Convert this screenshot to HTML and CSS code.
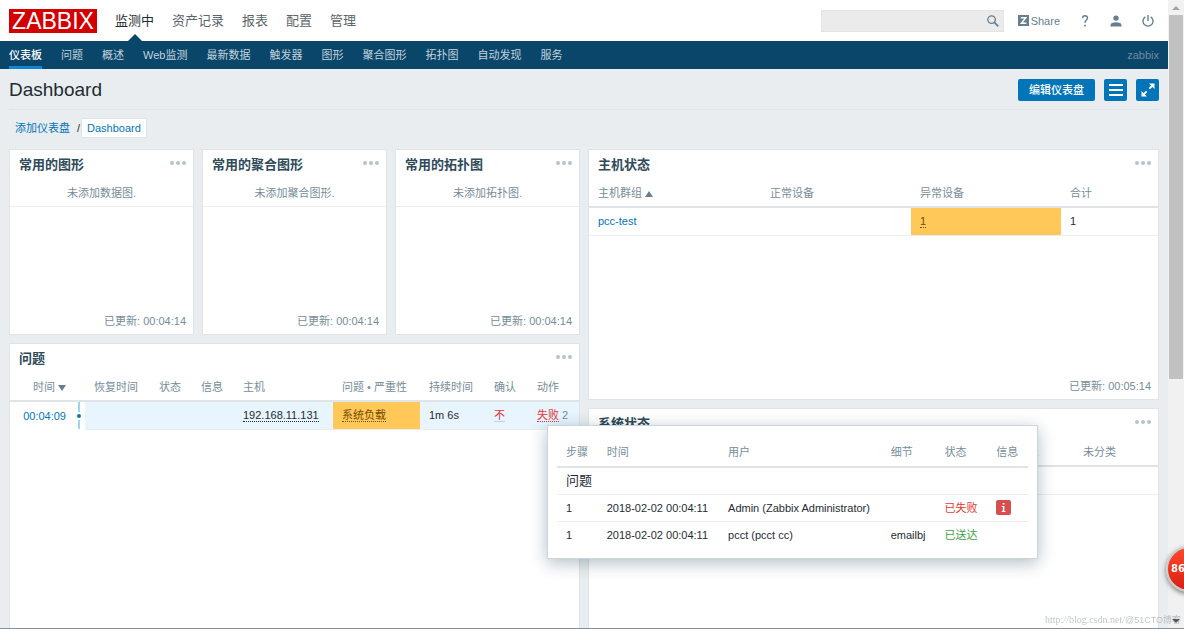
FILE: index.html
```html
<!DOCTYPE html>
<html lang="zh-CN">
<head>
<meta charset="utf-8">
<title>Dashboard</title>
<link rel="stylesheet" href="styles.css">
</head>
<body>
<div class="app">
  <div class="page">
    <header class="top">
      <a class="logo" href="#">ZABBIX</a>
      <nav class="main-nav">
        <a class="active" href="#">监测中</a><a href="#">资产记录</a><a href="#">报表</a><a href="#">配置</a><a href="#">管理</a>
      </nav>
      <form class="search">
        <input type="text" aria-label="搜索">
        <button type="button" aria-label="搜索"><svg viewBox="0 0 12 12" width="12" height="12"><circle cx="4.600" cy="4.600" r="3.800" fill="none" stroke="currentColor" stroke-width="1.300"/><path d="M7.300 7.300L11.300 11.300" stroke="currentColor" stroke-width="1.800"/></svg></button>
      </form>
      <div class="tools">
        <a class="share" href="#"><svg viewBox="0 0 11 11" width="11" height="11"><path d="M0 0h11v11H0z" fill="currentColor"/><path d="M2.800 2.800h5L3.400 8.200H8.400" fill="none" stroke="#fff" stroke-width="1.400"/></svg>Share</a>
        <a href="#" aria-label="帮助"><svg viewBox="1 0 10 12" width="10" height="12"><path d="M3.500 3.300C3.600 1.500 4.700.8 6 .8c1.500 0 2.500.9 2.500 2.300C8.500 5 6 5.200 6 7.800" fill="none" stroke="currentColor" stroke-width="1.400"/><path d="M5.200 9.800h1.600v1.600H5.200z" fill="currentColor"/></svg></a>
        <a href="#" aria-label="用户"><svg viewBox="0 0 12 12" width="12" height="12"><circle cx="6" cy="3.100" r="2.700" fill="currentColor"/><path d="M.5 11.500V10C.5 8.200 3 7.200 6 7.200s5.500 1 5.500 2.800v1.500z" fill="currentColor"/></svg></a>
        <a href="#" aria-label="退出"><svg viewBox="0 0 12 12" width="12" height="12"><path d="M3.300 1.900a5 5 0 1 0 5.400 0M6 0v6" fill="none" stroke="currentColor" stroke-width="1.400"/></svg></a>
      </div>
    </header>
    <nav class="sub-nav">
      <a class="active" href="#">仪表板</a><a href="#">问题</a><a href="#">概述</a><a href="#">Web监测</a><a href="#">最新数据</a><a href="#">触发器</a><a href="#">图形</a><a href="#">聚合图形</a><a href="#">拓扑图</a><a href="#">自动发现</a><a href="#">服务</a>
      <span class="server">zabbix</span>
    </nav>
    <main>
      <div class="title-row">
        <h1>Dashboard</h1>
        <button class="btn" type="button">编辑仪表盘</button>
        <button class="btn icon" type="button" aria-label="菜单"><svg viewBox="0 0 14 12" width="14" height="12"><path d="M0 1h14M0 6h14M0 11h14" stroke="#fff" stroke-width="2"/></svg></button>
        <button class="btn icon" type="button" aria-label="全屏"><svg viewBox="0 0 14 14" width="14" height="14"><path d="M8 .5h5.500V6zM.5 8v5.500H6z" fill="#fff"/><path d="M8.300 5.700l3.200-3.200M2.500 11.500l3.200-3.200" stroke="#fff" stroke-width="1.800"/></svg></button>
      </div>
      <div class="crumbs"><a href="#">添加仪表盘</a><span>/</span><a class="current" href="#">Dashboard</a></div>
      <div class="dashboard">
        <div class="column">
          <div class="trio">
            <section class="panel">
              <div class="panel-head"><h2>常用的图形</h2><button class="dots" type="button" aria-label="更多"><i></i><i></i><i></i></button></div>
              <p class="empty">未添加数据图.</p>
              <p class="updated">已更新: 00:04:14</p>
            </section>
            <section class="panel">
              <div class="panel-head"><h2>常用的聚合图形</h2><button class="dots" type="button" aria-label="更多"><i></i><i></i><i></i></button></div>
              <p class="empty">未添加聚合图形.</p>
              <p class="updated">已更新: 00:04:14</p>
            </section>
            <section class="panel">
              <div class="panel-head"><h2>常用的拓扑图</h2><button class="dots" type="button" aria-label="更多"><i></i><i></i><i></i></button></div>
              <p class="empty">未添加拓扑图.</p>
              <p class="updated">已更新: 00:04:14</p>
            </section>
          </div>
          <section class="panel fill">
            <div class="panel-head"><h2>问题</h2><button class="dots" type="button" aria-label="更多"><i></i><i></i><i></i></button></div>
            <table class="list problems">
              <thead><tr><th class="c-time">时间 <i class="sort down"></i></th><th class="c-line"></th><th class="c-recovery">恢复时间</th><th class="c-status">状态</th><th class="c-info">信息</th><th class="c-host">主机</th><th class="c-problem">问题 • 严重性</th><th class="c-duration">持续时间</th><th class="c-ack">确认</th><th class="c-action">动作</th></tr></thead>
              <tbody><tr>
                <td class="c-time"><a href="#">00:04:09</a></td><td class="c-line"><i class="dot"></i></td><td></td><td></td><td></td>
                <td><a class="dark" href="#">192.168.11.131</a></td>
                <td class="warn"><a class="brown" href="#">系统负载</a></td>
                <td>1m 6s</td>
                <td><a class="ack" href="#">不</a></td>
                <td class="action"><a class="fail" href="#">失败</a> <span class="count">2</span>
                  <div class="popup">
                    <table>
                      <thead><tr><th>步骤</th><th>时间</th><th>用户</th><th>细节</th><th>状态</th><th>信息</th></tr></thead>
                      <tbody>
                        <tr><td class="group" colspan="6">问题</td></tr>
                        <tr><td>1</td><td>2018-02-02 00:04:11</td><td>Admin (Zabbix Administrator)</td><td></td><td class="red">已失败</td><td><button class="info" type="button" aria-label="信息"><svg viewBox="0 0 15 15" width="15" height="15"><path d="M6.700 3h1.800v1.600H6.700zM5.700 6h2.700v5h1v1H5.700v-1h1.100V7H5.700z" fill="#fff"/></svg></button></td></tr>
                        <tr><td>1</td><td>2018-02-02 00:04:11</td><td>pcct (pcct cc)</td><td>emailbj</td><td class="green">已送达</td><td></td></tr>
                      </tbody>
                    </table>
                  </div>
                </td>
              </tr></tbody>
            </table>
          </section>
        </div>
        <div class="column">
          <section class="panel hosts-panel">
            <div class="panel-head"><h2>主机状态</h2><button class="dots" type="button" aria-label="更多"><i></i><i></i><i></i></button></div>
            <table class="list hosts">
              <thead><tr><th>主机群组 <i class="sort up"></i></th><th class="h-count">正常设备</th><th class="h-count">异常设备</th><th class="h-total">合计</th></tr></thead>
              <tbody><tr><td><a href="#">pcc-test</a></td><td></td><td class="warn"><a class="brown" href="#">1</a></td><td>1</td></tr></tbody>
            </table>
            <p class="updated">已更新: 00:05:14</p>
          </section>
          <section class="panel fill">
            <div class="panel-head"><h2>系统状态</h2><button class="dots" type="button" aria-label="更多"><i></i><i></i><i></i></button></div>
            <table class="list system">
              <thead><tr><th class="s-rest">.</th><th class="s-none">未分类</th></tr></thead>
              <tbody><tr><td></td><td></td></tr></tbody>
            </table>
          </section>
        </div>
      </div>
    </main>
  </div>
  <div class="scrollbar"><i class="arrow-up"></i><div class="thumb"></div><i class="arrow-down"></i></div>
</div>
<div class="badge">86</div>
<div class="mark"><span class="mark-url">http://blog.csdn.net/</span><span class="mark-site">@51CTO博客</span></div>
</body>
</html>
```

FILE: styles.css
```css
* { box-sizing: border-box; }
body {
  margin: 0;
  background: #e9edef;
  color: #1f2c33;
  font: 11px/16px "Liberation Sans", Arial, "Noto Sans CJK SC", sans-serif;
}
a { color: #0275b8; text-decoration: none; }
button { font: inherit; border: 0; padding: 0; cursor: pointer; }
h1, h2, p { margin: 0; }
svg { display: block; }
.app {
  display: grid;
  grid-template-columns: minmax(0, 1fr) 16px;
  height: 100vh;
  overflow: hidden;
  border-bottom: 1px solid #8b8f92;
}
.page { display: flex; flex-direction: column; min-height: 0; }

.top { display: flex; align-items: center; height: 41px; padding: 0 14px 0 9px; background: #fff; flex: none; }
.logo { width: 88px; height: 24px; background: #d40000; color: #fff; font-size: 23px; line-height: 24px; text-align: center; }
.main-nav { display: flex; gap: 18px; margin-left: 18px; align-self: stretch; }
.main-nav a { position: relative; font-size: 13px; line-height: 41px; color: #5a6469; }
.main-nav .active { color: #1f2c33; }
.main-nav .active::after {
  content: "";
  position: absolute;
  left: 50%;
  bottom: 0;
  margin-left: -7px;
  border: 7px solid transparent;
  border-top: 0;
  border-bottom-color: #0a466a;
}
.search { display: flex; margin-left: auto; width: 183px; height: 22px; background: #ebebeb; border: 1px solid #e2e4e5; }
.search input { flex: 1; min-width: 0; border: 0; background: none; outline: 0; }
.search button { width: 16px; background: none; color: #66808f; }
.tools { display: flex; align-items: center; gap: 20px; margin-left: 14px; }
.tools a { display: flex; align-items: center; gap: 2px; color: #66808f; }

.sub-nav { display: flex; gap: 19px; height: 28px; padding: 0 9px; background: #0a466a; flex: none; }
.sub-nav a { color: #c3d3dd; line-height: 28px; }
.sub-nav .active { color: #fff; font-weight: 500; border-bottom: 3px solid #0f86d4; }
.sub-nav .server { margin-left: auto; line-height: 28px; color: #6d8ca0; }

main { flex: 1; display: flex; flex-direction: column; min-height: 0; padding: 0 9px; }
.title-row { display: flex; align-items: center; gap: 9px; height: 41px; padding-top: 2px; border-bottom: 1px solid #dfe4e7; flex: none; }
h1 { flex: 1; font-size: 19px; line-height: 24px; font-weight: 400; }
.btn { display: flex; align-items: center; justify-content: center; height: 22px; padding: 0 11px; background: #0275b8; color: #fff; border-radius: 2px; font-weight: 500; }
.btn.icon { width: 23px; padding: 0; }
.crumbs { display: flex; align-items: center; height: 39px; padding: 0 6px 3px; flex: none; }
.crumbs span { margin-left: 7px; }
.crumbs .current { padding: 1px 5px; background: #fff; border: 1px solid #dfe4e7; margin-left: 1px; }

.dashboard { flex: 1; display: grid; grid-template-columns: minmax(0, 1fr) minmax(0, 1fr); gap: 8px; min-height: 0; }
.column { display: flex; flex-direction: column; gap: 8px; min-width: 0; }
.trio { display: grid; grid-template-columns: repeat(3, minmax(0, 1fr)); gap: 8px; }
.panel { display: flex; flex-direction: column; background: #fff; border: 1px solid #dfe4e7; min-height: 186px; }
.hosts-panel { min-height: 251px; }
.fill { flex: 1; border-bottom: 0; }
.panel-head { display: flex; justify-content: space-between; height: 30px; padding: 0 7px 0 9px; }
h2 { font-size: 13px; line-height: 30px; font-weight: 700; color: #2f4a59; }
.dots { display: flex; gap: 2px; align-items: center; height: 25px; background: none; }
.dots i { width: 4px; height: 4px; border-radius: 50%; background: #b4c3cc; }
.empty { padding: 5px 0; text-align: center; color: #768d99; border-bottom: 1px solid #ebeef0; }
.updated { margin-top: auto; padding: 0 7px 5px; text-align: right; color: #768d99; }

table { border-collapse: collapse; }
th, td { padding: 0 9px; text-align: left; white-space: nowrap; font-weight: 400; }
th { color: #768d99; }
.list { width: 100%; table-layout: fixed; }
.list > thead th { height: 27px; border-bottom: 2px solid #dfe4e7; }
.list > tbody > tr > td { height: 28px; border-bottom: 1px solid #ebeef0; }
.sort { display: inline-block; border: 4px solid transparent; }
.sort.up { border-top: 0; border-bottom: 6px solid #66808f; }
.sort.down { border-bottom: 0; border-top: 6px solid #66808f; }
.warn { background: #ffc859; }
.dark, .brown, .fail { border-bottom: 1px dotted; }
.dark { color: #1f2c33; }
.brown { color: #734d00; }
.fail, .ack { color: #e33734; }
.ack { border-bottom: 1px solid #c6cfd5; }
.count { color: #768d99; }
.h-count { width: 150px; }
.h-total { width: 97px; }

.problems > tbody > tr { background: #e8f5ff; }
.problems .c-time { width: 65px; text-align: right; background: #fff; }
.problems > tbody .c-time, .problems > tbody .c-line { border-bottom: 0; }
.problems .c-line { width: 10px; padding: 0; background: #fff; }
.problems td.c-line { background: linear-gradient(#9fd3f3, #9fd3f3) 3px 0 / 2px 100% no-repeat #fff; }
.dot { display: block; width: 8px; height: 8px; border: 2px solid #fff; border-radius: 50%; background: #0275b8; }
.c-recovery, .c-duration { width: 65px; }
.c-status, .c-info { width: 42px; }
.c-problem { width: 87px; }
.c-ack { width: 43px; }
.c-action { width: 51px; }
.action { position: relative; }

.popup {
  position: absolute;
  z-index: 2;
  left: 19px;
  top: 23px;
  width: 491px;
  padding: 10px 9px;
  background: #fff;
  border: 1px solid #ccd5d9;
  box-shadow: 0 4px 16px rgba(0, 40, 60, 0.3);
}
.popup table { width: 100%; }
.popup th { height: 31px; padding-top: 2px; border-bottom: 2px solid #dfe4e7; }
.popup td { height: 27px; border-bottom: 1px solid #ebeef0; }
.popup tr:last-child td { border-bottom: 0; }
.popup tbody tr:first-child td { border-bottom: 1px solid #ebeef0; }
.popup .group { font-size: 13px; }
.popup .red { color: #e33734; }
.popup .green { color: #429e47; }
.info { display: block; width: 15px; height: 15px; border-radius: 2px; background: #d64e4e; }

.system .s-none { width: 117px; text-align: center; }
.system .s-rest { text-align: right; padding-right: 2px; }

.scrollbar { display: flex; flex-direction: column; align-items: center; gap: 5px; padding: 6px 1px 5px; background: #f1f1f1; }
.scrollbar i { width: 8px; height: 4px; }
.arrow-up { background: #a3a3a3; clip-path: polygon(50% 0, 100% 100%, 0 100%); }
.arrow-down { margin-top: auto; background: #505050; clip-path: polygon(0 0, 100% 0, 50% 100%); }
.thumb { width: 100%; height: 59%; background: #c1c1c1; }
.badge {
  position: fixed;
  right: -28px;
  bottom: 37px;
  width: 46px;
  height: 46px;
  padding-left: 3px;
  border: 2px solid #c9cccd;
  border-radius: 50%;
  background: linear-gradient(#ff4a2c, #d81e12);
  box-shadow: 0 2px 5px rgba(0, 0, 0, 0.5);
  color: #fff;
  font: bold 10px/42px "DejaVu Sans", sans-serif;
}
.mark { position: fixed; right: 3px; bottom: 1px; display: flex; color: rgba(120, 125, 128, 0.45); font-size: 9px; }
.mark-url { font-family: "Liberation Serif", serif; font-size: 10px; }
```
